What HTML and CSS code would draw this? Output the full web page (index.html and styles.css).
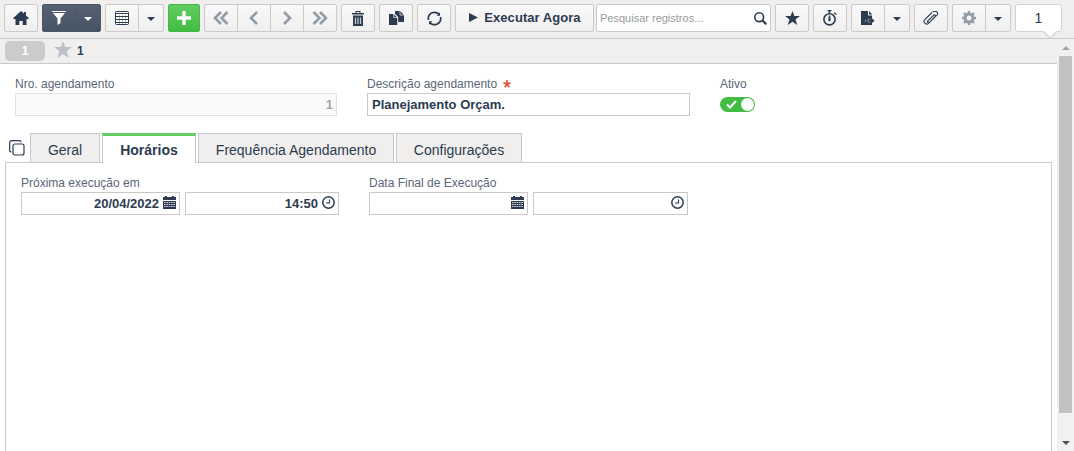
FILE: index.html
```html
<!DOCTYPE html>
<html lang="pt-BR">
<head>
  <meta charset="UTF-8">
  <title>Agendamento</title>
  <link rel="stylesheet" href="styles.css">
</head>
<body>
  <svg class="defs">
    <symbol id="calendar" viewBox="0 0 13 13">
      <path d="M0 1h2V0h2v1h5V0h2v1h2v3H0z"/>
      <path d="M0 5h13v8H0z"/>
      <path d="M1 6.500h11M1 8.500h11M1 10.500h11" stroke="#dfe2e6" stroke-width=".9" stroke-dasharray="1.600 .75"/>
    </symbol>
    <symbol id="clock" viewBox="0 0 13 13">
      <circle cx="6.500" cy="6.500" r="5.700" fill="none" stroke="currentColor" stroke-width="1.500"/>
      <path d="M7.500 3.500V7H4" fill="none" stroke="currentColor" stroke-width="1.100"/>
    </symbol>
  </svg>

  <header class="toolbar">
    <button class="btn"><svg width="16" height="14" viewBox="0 0 16 14"><path d="M8 0l3 2.600V1h2v3.400L16 7.200l-.7.8H13.500v6H9.700v-4H6.300v4H2.500V8H.7L0 7.200z"/></svg></button>

    <div class="group dark">
      <button class="btn"><svg width="14" height="14" viewBox="0 0 14 14"><path d="M0 0h14v1H0zM1 2h12L8.500 7.500V12L5.500 14V7.500z"/></svg></button>
      <button class="btn caret"></button>
    </div>

    <div class="group">
      <button class="btn"><svg width="14" height="14" viewBox="0 0 14 14"><rect x=".5" y=".5" width="13" height="13" rx="1" fill="#fff" stroke="currentColor"/><path d="M4.500 4v9M7.500 4v9M10.500 4v9" stroke="#b3b9c2"/><path d="M1 2.500h12M1 5.500h12M1 8.500h12M1 11.500h12" stroke="currentColor" stroke-width="1.200"/></svg></button>
      <button class="btn caret"></button>
    </div>

    <button class="btn add"><svg width="14" height="14" viewBox="0 0 14 14"><path d="M5.300 0h3.400v5.300H14v3.400H8.700V14H5.300V8.700H0V5.300h5.300z"/></svg></button>

    <div class="group nav">
      <button class="btn"><svg width="16" height="14" viewBox="0 0 16 14"><path d="M8 1L2 7l6 6M14.500 1l-6 6 6 6"/></svg></button>
      <button class="btn"><svg width="16" height="14" viewBox="0 0 16 14"><path d="M11 1L5 7l6 6"/></svg></button>
      <button class="btn"><svg width="16" height="14" viewBox="0 0 16 14"><path d="M5 1l6 6-6 6"/></svg></button>
      <button class="btn"><svg width="16" height="14" viewBox="0 0 16 14"><path d="M1.500 1l6 6-6 6M8 1l6 6-6 6"/></svg></button>
    </div>

    <button class="btn"><svg width="12" height="15" viewBox="0 0 12 15"><path d="M0 2h3.500V0h5v2H12v1.500H0zM4.500 1v1h3V1zM1 4.500h10V15H1z" fill-rule="evenodd"/><path d="M3.500 6.500v6.500M6 6.500v6.500M8.500 6.500v6.500" stroke="#c9cdd3" stroke-width="1.200"/></svg></button>
    <button class="btn"><svg width="15" height="14" viewBox="0 0 15 14"><path d="M0 3h4.500l3.700 3.500V14H0z"/><path d="M6 0h5l4 4v7H9.200V6L6 2.800z"/><path d="M4.700 3v3.500h3.500M11 0v4h4" fill="none" stroke="#f3f3f3" stroke-width=".7"/></svg></button>
    <button class="btn"><svg width="15" height="15" viewBox="0 0 15 15"><path d="M1.300 9V7.500a6.200 6.200 0 0 1 10.600-4.300M13.700 6v1.500a6.200 6.200 0 0 1-10.600 4.300" fill="none" stroke="currentColor" stroke-width="1.700"/><path d="M13 1.200v3.600H9.600zM2 13.800v-3.600h3.400z"/></svg></button>

    <button class="btn run"><svg width="9" height="9" viewBox="0 0 9 9"><path d="M0 0l9 4.500L0 9z"/></svg>Executar Agora</button>

    <div class="search">
      <span>Pesquisar registros...</span>
      <svg width="13" height="13" viewBox="0 0 13 13"><circle cx="5.200" cy="5.200" r="4.400" fill="none" stroke="currentColor" stroke-width="1.600"/><path d="M8.300 8.300l4 4" stroke="currentColor" stroke-width="2.200"/></svg>
    </div>

    <button class="btn"><svg width="15" height="14" viewBox="0 0 15 14"><path d="M7.500 0l1.900 5H15l-4.500 3.400L12.200 14 7.500 10.700 2.800 14l1.700-5.600L0 5h5.600z"/></svg></button>
    <button class="btn"><svg width="14" height="16" viewBox="0 0 14 16"><circle cx="6.500" cy="9.300" r="5.600" fill="none" stroke="currentColor" stroke-width="1.600"/><path d="M4.500 0h4v1.300H7.300V3H5.700V1.300H4.500zM11.300 2.300L13.800 4l-.8 1-2.300-1.700zM5.900 5.500h1.200l.6 4.500a1.200 1.200 0 0 1-2.400 0z"/></svg></button>

    <div class="group">
      <button class="btn"><svg width="14" height="14" viewBox="0 0 14 14"><path d="M0 0h7v4.500h4v2.800l2.500 2.400-2.500 2.300v2H0z"/><path d="M8 0l3.200 3.600H8z"/><path d="M4.500 8.500V11M9.500 8.200H7v3h2.500" stroke="#a9b0ba" fill="none" stroke-width=".7"/></svg></button>
      <button class="btn caret"></button>
    </div>

    <button class="btn"><svg width="16" height="14" viewBox="0 0 16 14"><path d="M4.800 10l5.700-5.600c1.300-1.200 2.600 0 1.500 1.300l-5.400 5.600c-.9.900-2.600.2-1.800-1.300M4.800 10M9 1.500L2 8.400c-2.600 2.700.8 6.300 3.700 3.700l8.400-8.300C16.200 1.500 12-1 9.600.9" fill="none" stroke="currentColor" stroke-width="1.100"/></svg></button>

    <div class="group">
      <button class="btn muted"><svg width="14" height="14" viewBox="0 0 14 14"><circle cx="7" cy="7" r="4" fill="none" stroke="currentColor" stroke-width="3"/><path d="M7 0v3M7 11v3M0 7h3M11 7h3M2 2l2 2M10 10l2 2M12 2l-2 2M4 10l-2 2" stroke="currentColor" stroke-width="2.400"/></svg></button>
      <button class="btn caret"></button>
    </div>

    <div class="counter">1</div>
  </header>

  <div class="main">
    <div class="page">
      <div class="records">
        <span class="badge">1</span>
        <svg width="18" height="17" viewBox="0 0 18 17"><path d="M9 0l2.300 6H18l-5.300 4.200L14.600 17 9 13l-5.600 4 1.900-6.800L0 6h6.700z"/></svg>
        <b>1</b>
      </div>

      <div class="fields">
        <div class="field number">
          <label>Nro. agendamento</label>
          <div class="input disabled right">1</div>
        </div>
        <div class="field description">
          <label>Descrição agendamento <svg class="required" width="8" height="8" viewBox="0 0 8 8"><path d="M4 4V0M4 4L.3 2.800M4 4L1.700 7.200M4 4l2.300 3.200M4 4l3.700-1.200"/></svg></label>
          <div class="input">Planejamento Orçam.</div>
        </div>
        <div class="field">
          <label>Ativo</label>
          <div class="switch"><svg width="11" height="9" viewBox="0 0 11 9"><path d="M1 4.500l3 3L10 1" fill="none" stroke="#fff" stroke-width="2"/></svg><i></i></div>
        </div>
      </div>

      <nav class="tabs">
        <svg class="stack" width="16" height="16" viewBox="0 0 16 16"><rect x="4" y="4" width="11" height="11" rx="2"/><path d="M2.500 12C1.300 12 .7 11.300.7 10V3C.7 1.500 1.500.7 3 .7h7c1.300 0 2 .6 2 1.600"/></svg>
        <a class="tab general">Geral</a>
        <a class="tab active">Horários</a>
        <a class="tab frequency">Frequência Agendamento</a>
        <a class="tab config">Configurações</a>
      </nav>

      <section class="panel">
        <div class="field next-run">
          <label>Próxima execução em</label>
          <div class="pair">
            <div class="input date">20/04/2022<svg width="13" height="13"><use href="#calendar"/></svg></div>
            <div class="input time">14:50<svg width="13" height="13"><use href="#clock"/></svg></div>
          </div>
        </div>
        <div class="field">
          <label>Data Final de Execução</label>
          <div class="pair">
            <div class="input date"><svg width="13" height="13"><use href="#calendar"/></svg></div>
            <div class="input time end"><svg width="13" height="13"><use href="#clock"/></svg></div>
          </div>
        </div>
      </section>
    </div>

    <div class="scrollbar">
      <i class="up"></i>
      <div class="thumb"></div>
      <i class="down"></i>
    </div>
  </div>
</body>
</html>
```
FILE: styles.css
```css
* {
  box-sizing: border-box;
}

body {
  margin: 0;
  height: 451px;
  display: flex;
  flex-direction: column;
  overflow: hidden;
  background: #fff;
  color: #2c3b50;
  font-family: "Liberation Sans", Arial, sans-serif;
  font-size: 12px;
}

svg {
  display: block;
  flex: none;
  fill: currentColor;
}

.defs {
  position: absolute;
  width: 0;
  height: 0;
}

/* toolbar */
.toolbar {
  flex: none;
  display: flex;
  gap: 4px;
  height: 39px;
  padding: 4px 4px 0;
  background: #f0efed;
  border-bottom: 1px solid #c9c9c9;
}

.btn {
  display: flex;
  align-items: center;
  justify-content: center;
  flex: none;
  width: 34px;
  height: 28px;
  padding: 0;
  border: 1px solid #cacaca;
  border-radius: 2px;
  background: linear-gradient(#f9f9f9, #efefef);
  color: #2c3b50;
  font-family: inherit;
}

.group {
  display: flex;
  flex: none;
}

.group .btn + .btn {
  margin-left: -1px;
  border-top-left-radius: 0;
  border-bottom-left-radius: 0;
}

.group .btn:not(:last-child) {
  border-top-right-radius: 0;
  border-bottom-right-radius: 0;
}

.group .caret {
  width: 26px;
}

.caret::after {
  content: "";
  margin-top: 2px;
  border: 4px solid transparent;
  border-top-color: currentColor;
  border-bottom: 0;
}

.dark .btn {
  color: #fff;
  background: linear-gradient(#566273, #465364);
  border-color: #4b5768;
}

.btn.add {
  width: 32px;
  color: #fff;
  background: linear-gradient(#62cc62, #40bd40);
  border-color: #43b943;
}

.nav .btn {
  color: #929ba8;
}

.nav path {
  fill: none;
  stroke: currentColor;
  stroke-width: 2.6;
}

.btn.muted {
  color: #929ba8;
}

.run {
  width: 139px;
  gap: 6px;
  padding: 0 0 1px 1px;
  font-size: 13px;
  font-weight: bold;
  letter-spacing: 0.05px;
}

.run svg {
  margin-top: -1px;
}

.search {
  display: flex;
  flex: none;
  align-items: center;
  justify-content: space-between;
  width: 175px;
  height: 28px;
  margin-left: -2px;
  padding: 0 3px;
  border: 1px solid #cacaca;
  border-radius: 2px;
  background: #fff;
}

.search span {
  color: #999;
  font-size: 11px;
}

.counter {
  position: relative;
  flex: none;
  width: 47px;
  height: 28px;
  line-height: 27px;
  border: 1px solid #d2d2d2;
  border-radius: 3px;
  background: #fff;
  text-align: center;
  font-size: 14px;
}

.counter::after {
  content: "";
  position: absolute;
  left: 29px;
  top: 22px;
  width: 9px;
  height: 9px;
  transform: rotate(45deg);
  border: solid #cacaca;
  border-width: 0 1px 1px 0;
  background: #fff;
}

/* page */
.main {
  flex: 1;
  display: flex;
  min-height: 0;
}

.page {
  flex: 1;
  display: flex;
  flex-direction: column;
}

.records {
  display: flex;
  align-items: center;
  height: 25px;
  padding: 0 5px 1px;
  border-bottom: 1px solid #c9c9c9;
  background: #efefef;
}

.records svg {
  margin: -2px 5px 0 9px;
  color: #bcc0c9;
}

.badge {
  width: 40px;
  height: 20px;
  line-height: 20px;
  border-radius: 5px;
  background: #cbcbcb;
  color: #fff;
  text-align: center;
  font-size: 13px;
  font-weight: bold;
}

.fields {
  display: flex;
  height: 69px;
  padding: 12px 15px 0;
}

.field label {
  display: flex;
  height: 17px;
  line-height: 16px;
  color: #5b6677;
}

.number {
  width: 322px;
  margin-right: 30px;
}

.description {
  width: 323px;
  margin-right: 30px;
}

.input {
  display: flex;
  align-items: center;
  height: 23px;
  padding: 0 3px 0 4px;
  border: 1px solid #c9c9c9;
  background: #fff;
  font-size: 13px;
  font-weight: bold;
}

.right {
  justify-content: flex-end;
}

.disabled {
  border-color: #e2e2e2;
  background: #fafafa;
  color: #a0a7b1;
}

.required {
  margin: 4px 0 0 6px;
  stroke: #e2513f;
  stroke-width: 1.7;
}

.switch {
  display: flex;
  align-items: center;
  justify-content: space-between;
  width: 35px;
  height: 15px;
  margin-top: 4px;
  padding: 0 1px 0 6px;
  border-radius: 8px;
  background: #42bd42;
}

.switch i {
  width: 13px;
  height: 13px;
  border-radius: 50%;
  background: #fff;
}

/* tabs */
.tabs {
  position: relative;
  display: flex;
  gap: 2px;
  height: 30px;
  padding-left: 9px;
}

.stack {
  margin: 7px 3px 0 0;
  fill: none;
  stroke: currentColor;
  stroke-width: 1.2;
}

.tab {
  height: 29px;
  line-height: 32px;
  border: 1px solid #c9c9c9;
  border-bottom: 0;
  background: #f0efed;
  text-align: center;
  font-size: 14px;
}

.general {
  width: 70px;
}

.active {
  width: 94px;
  height: 30px;
  line-height: 28px;
  border-top: 3px solid #62cb62;
  background: #fff;
  font-weight: bold;
}

.frequency {
  width: 196px;
}

.config {
  width: 126px;
}

.panel {
  flex: 1;
  display: flex;
  margin: -1px 5px 0;
  padding: 12px 15px;
  border: 1px solid #c9c9c9;
  border-bottom: 0;
}

.pair {
  display: flex;
  gap: 5px;
}

.pair .input {
  justify-content: flex-end;
  gap: 4px;
  padding: 0 3px;
}

.pair svg {
  margin-top: -2px;
}

.next-run {
  margin-right: 30px;
}

.date {
  width: 159px;
}

.time {
  width: 154px;
}

.time.end {
  width: 155px;
}

/* scrollbar */
.scrollbar {
  display: flex;
  flex-direction: column;
  align-items: center;
  width: 17px;
  background: #f1f1f1;
}

.thumb {
  width: 13px;
  height: 357px;
  background: #c1c1c1;
}

.up,
.down {
  border: 4px solid transparent;
}

.up {
  margin: 7px 0 6px;
  border-top: 0;
  border-bottom-color: #a3a3a3;
}

.down {
  margin-top: 28px;
  border-bottom: 0;
  border-top-color: #505050;
}
```
